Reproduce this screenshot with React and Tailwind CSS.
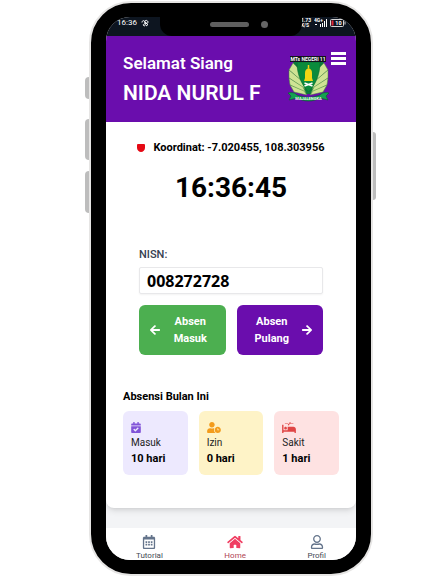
import React from "react";
import {
  FaArrowLeft,
  FaArrowRight,
  FaCalendarCheck,
  FaHome,
  FaProcedures,
  FaRegCalendarAlt,
  FaRegUser,
  FaUserClock,
} from "react-icons/fa";

const summary = [
  { label: "Masuk", value: "10 hari", Icon: FaCalendarCheck, card: "bg-[#ede9fe]", icon: "h-[11px] w-[10px] text-[#8154d8]" },
  { label: "Izin", value: "0 hari", Icon: FaUserClock, card: "bg-[#fef3c7]", icon: "h-[11px] w-[14px] text-[#f39c1c]" },
  { label: "Sakit", value: "1 hari", Icon: FaProcedures, card: "bg-[#fee2e2]", icon: "h-[11px] w-[14px] text-[#e04444]" },
];

const tabs = [
  { label: "Tutorial", Icon: FaRegCalendarAlt, icon: "text-[#64748b]", text: "text-[#444a55]" },
  { label: "Home", Icon: FaHome, icon: "text-[#f03e62]", text: "text-[#b04454]" },
  { label: "Profil", Icon: FaRegUser, icon: "text-[#64748b]", text: "text-[#444a55]" },
];

function SchoolLogo() {
  return (
    <svg viewBox="0 0 42 46" className="h-[46px] w-[42px] shrink-0" role="img" aria-label="MTs Negeri 11 Majalengka">
      <path d="M5 5h31l-5 22-7 11h-7l-7-11Z" fill="#0c7a3a" />
      <g fill="#cfe394" stroke="#3f8a3a" strokeWidth=".5">
        <path d="M5 7 12 14l4 13L1 14Z" />
        <path d="M1 14 14 25l3 8L1 22Z" />
        <path d="M1 22 15 31l3 6L2 29Z" />
        <path d="M2 29 16 35l3 4L6 36Z" />
        <path d="M36 7 29 14l-4 13 15-13Z" />
        <path d="M40 14 27 25l-3 8 16-11Z" />
        <path d="M40 22 26 31l-3 6 16-8Z" />
        <path d="M39 29 25 35l-3 4 13-3Z" />
      </g>
      <path d="M9 6h23c0 12-4 22-11.500 30C13 28 9 18 9 6Z" fill="#0a8b3c" stroke="#0a6b30" strokeWidth=".6" />
      <path d="M20.500 9v3" stroke="#f4d514" strokeWidth="1.500" />
      <path d="M17 22v-5c0-3 1.500-4 3.500-5 2 1 3.500 2 3.500 5v5l1 3h-9Z" fill="#f4d514" />
      <path d="m16.500 30 8-3m-8 0 8 3" fill="none" stroke="#fff" strokeWidth="1.500" />
      <path d="M0 37c5-1 7 0 9 2 8 3 15 3 23 0 2-2 4-3 9-2l-3 3 2 4-8-2c-7 4-16 4-23 0l-8 2 2-4Z" fill="#14a050" stroke="#075c2b" strokeWidth=".6" />
      <text x="20.500" y="43.500" textAnchor="middle" fontSize="4" fontWeight="700" fill="#e8ffe8" fontFamily="Roboto, sans-serif">MAJALENGKA</text>
      <path d="M2 0h36v6H2Z" fill="#10121c" />
      <text x="20" y="4.800" textAnchor="middle" fontSize="5" fontWeight="700" fill="#fff" fontFamily="Roboto, sans-serif">MTs NEGERI 11</text>
    </svg>
  );
}

function StatusBar() {
  return (
    <div className="flex h-[19px] justify-between bg-[#0d1520] text-white">
      <div className="flex items-start gap-1 pt-px pl-[11px]">
        <span className="text-[8px] leading-[10px]">16:36</span>
        <svg viewBox="0 0 8 8" className="mt-px h-2 w-2" fill="none" stroke="currentColor" strokeWidth="1">
          <path d="M1 3.500C1 1 4 1 4 3.500S1 5 2.500 6.500 5 5 4 3.500 5 .5 6.500 2 6 5 4 3.500M4 3.500 7 5.500 5 7" />
        </svg>
      </div>
      <div className="flex items-start gap-[3px] pt-px pr-[10px]">
        <div className="text-[5px] leading-[5px] font-bold">
          <div>1.73</div>
          <div>K/S</div>
        </div>
        <svg viewBox="0 0 13 9" className="h-[9px] w-[13px]" fill="currentColor">
          <text x="0" y="4" fontSize="5" fontWeight="700" fontFamily="Roboto, sans-serif">4G+</text>
          <path d="M1 6h2v1H1ZM6 6h1v3H6ZM8 5h1v4H8ZM10 3h1v6h-1ZM12 1h1v8h-1Z" />
        </svg>
        <svg viewBox="0 0 16 8" className="mt-px h-2 w-4">
          <rect x=".5" y=".5" width="13" height="7" rx="1" fill="none" stroke="#d5d5d5" />
          <path d="M1.500 1.500h2v5h-2Z" fill="#e32636" />
          <path d="M14.500 2.500h1v3h-1Z" fill="#d5d5d5" />
          <text x="8.500" y="6" textAnchor="middle" fontSize="5.500" fontWeight="700" fill="#fff" fontFamily="Roboto, sans-serif">10</text>
        </svg>
      </div>
    </div>
  );
}

export default function App() {
  return (
    <main className="flex min-h-screen items-start justify-center overflow-hidden bg-white pt-px pl-7 font-['Roboto',sans-serif] text-black">
      <div className="flex flex-col pt-[76px]" aria-hidden="true">
        <div className="h-[22px] w-1 rounded-l-sm bg-[#bdbdbd]" />
        <div className="mt-5 h-[41px] w-1 rounded-l-sm bg-[#bdbdbd]" />
        <div className="mt-[11px] h-[42px] w-1 rounded-l-sm bg-[#bdbdbd]" />
      </div>

      <div className="relative w-[284px] rounded-[42px] border-2 border-[#e6e5e4] bg-black px-[15px] pt-[14px] pb-[14px]">
        <div className="overflow-hidden rounded-[24px] bg-[#f3f4f6]">
          <StatusBar />

          <header className="flex h-[86px] items-start bg-[#6a0dad] pr-[10px] pl-[17px] text-white">
            <div className="flex-1 pt-[15px] whitespace-nowrap">
              <p className="text-[17px] leading-6 font-semibold">Selamat Siang</p>
              <h1 className="mt-1 text-[21px] leading-7 font-semibold">NIDA NURUL F</h1>
            </div>
            <div className="flex items-start gap-px pt-4">
              <div className="pt-1">
                <SchoolLogo />
              </div>
              <button type="button" aria-label="Menu" className="flex w-[15px] flex-col gap-[2px]">
                <span className="h-[3px] w-full bg-white" />
                <span className="h-[3px] w-full bg-white" />
                <span className="h-[3px] w-full bg-white" />
              </button>
            </div>
          </header>

          <section className="h-[386px] rounded-b-lg bg-white px-[17px] pt-[18px] shadow-md">
            <div className="flex items-center justify-center gap-2 text-[11px] leading-4 font-bold whitespace-nowrap">
              <svg viewBox="0 0 8 8" className="h-2 w-2" fill="#e50914" aria-hidden="true">
                <path d="M0 1q0-1 1-1h6q1 0 1 1v3c0 2-2 4-4 4S0 6 0 4Z" />
              </svg>
              <p>Koordinat: -7.020455, 108.303956</p>
            </div>
            <p className="mt-4 text-center text-[28px] leading-8 font-bold">16:36:45</p>

            <form className="mt-[41px] px-4" onSubmit={(e) => e.preventDefault()}>
              <label htmlFor="nisn" className="block text-[11px] leading-5 font-medium text-[#374151]">
                NISN:
              </label>
              <input
                id="nisn"
                defaultValue="008272728"
                className="mt-[2px] block h-[27px] w-full rounded-xs border border-[#e8e8ea] bg-white px-[7px] font-['Noto_Sans','Open_Sans',sans-serif] text-base font-bold shadow-xs outline-none"
              />
              <div className="mt-[11px] grid grid-cols-2 gap-[11px] text-[11px] leading-[17px] font-bold text-white">
                <button type="button" className="flex h-[50px] items-center rounded-md bg-[#4caf50] px-[11px]">
                  <FaArrowLeft className="h-3 w-[10px]" />
                  <span className="flex-1 pl-[6px]">Absen<br />Masuk</span>
                </button>
                <button type="button" className="flex h-[50px] items-center rounded-md bg-[#6a0dad] px-[11px]">
                  <span className="flex-1 pr-[6px]">Absen<br />Pulang</span>
                  <FaArrowRight className="h-3 w-[10px]" />
                </button>
              </div>
            </form>

            <h2 className="mt-[34px] text-[11px] leading-4 font-bold">Absensi Bulan Ini</h2>
            <div className="mt-[6px] grid grid-cols-3 gap-[11px]">
              {summary.map(({ label, value, Icon, card, icon }) => (
                <div key={label} className={`h-[64px] rounded-md px-2 pt-[11px] ${card}`}>
                  <Icon className={icon} />
                  <p className="mt-[2px] text-[10px] leading-4 text-[#222]">{label}</p>
                  <p className="text-[11px] leading-4 font-bold">{value}</p>
                </div>
              ))}
            </div>
          </section>

          <nav className="mt-5 flex h-8 justify-between bg-white px-[30px]">
            {tabs.map(({ label, Icon, icon, text }) => (
              <a key={label} href="#" className="flex flex-col items-center pt-[7px]">
                <Icon className={`h-[14px] w-4 shrink-0 ${icon}`} />
                <span className={`mt-[2px] text-[8px] leading-[9px] ${text}`}>{label}</span>
              </a>
            ))}
          </nav>
        </div>

        <div className="absolute top-0 left-[69px] h-[33px] w-[142px] rounded-b-xl bg-black" aria-hidden="true">
          <div className="flex items-center gap-3 pt-[18px] pl-[50px]">
            <span className="h-[5px] w-[39px] rounded-full bg-[#5f5f5f]" />
            <span className="h-[7px] w-[7px] rounded-full bg-[#666]" />
          </div>
        </div>
      </div>

      <div className="pt-[131px]" aria-hidden="true">
        <div className="h-[68px] w-[3px] rounded-r-sm bg-[#bdbdbd]" />
      </div>
    </main>
  );
}
